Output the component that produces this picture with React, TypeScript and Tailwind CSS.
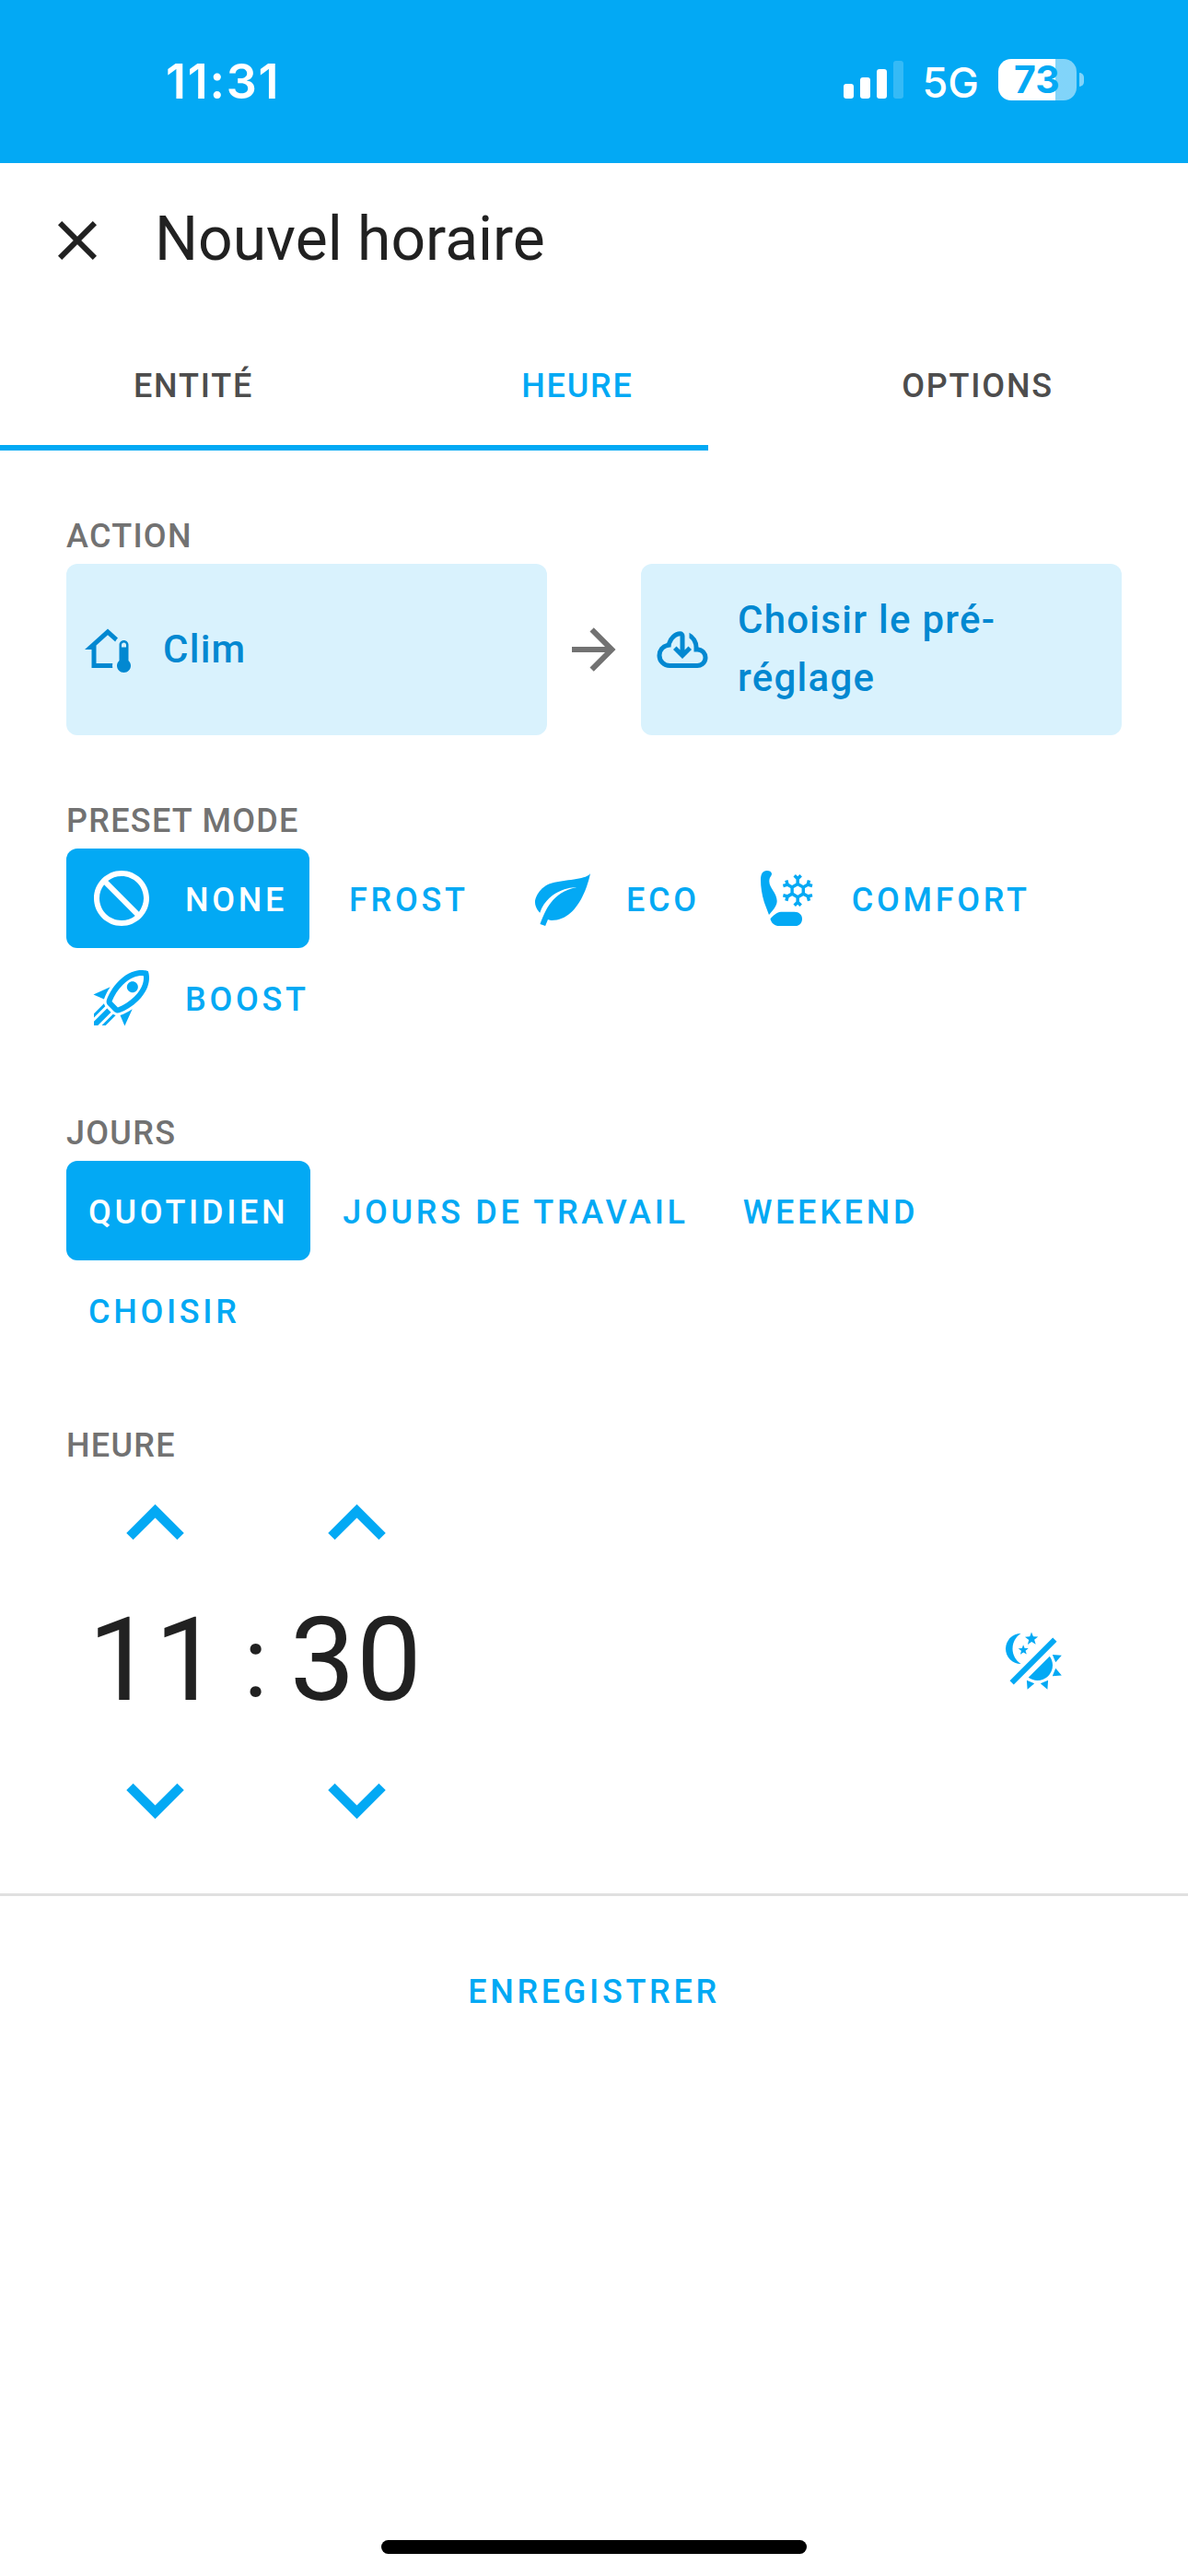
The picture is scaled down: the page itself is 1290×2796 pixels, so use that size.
import type { ReactNode } from "react";

const icons = {
  close:
    "M19,6.41L17.59,5L12,10.59L6.41,5L5,6.41L10.59,12L5,17.59L6.41,19L12,13.41L17.59,19L19,17.59L13.41,12L19,6.41Z",
  arrowRight:
    "M4,11V13H16L10.5,18.5L11.92,19.92L19.84,12L11.92,4.08L10.5,5.5L16,11H4Z",
  homeThermometer:
    "M19 8C20.11 8 21 8.9 21 10V16.76C21.61 17.31 22 18.11 22 19C22 20.66 20.66 22 19 22C17.34 22 16 20.66 16 19C16 18.11 16.39 17.31 17 16.76V10C17 8.9 17.9 8 19 8M19 9C18.45 9 18 9.45 18 10V11H20V10C20 9.45 19.55 9 19 9M12 5.69L7 10.19V18H14.1L14 19L14.1 20H5V12H2L12 3L16.4 6.96C15.89 7.4 15.5 7.97 15.25 8.61L12 5.69Z",
  cloudDownload:
    "M6.5 20Q4.22 20 2.61 18.43 1 16.85 1 14.58 1 12.63 2.17 11.1 3.35 9.57 5.25 9.15 5.68 7.35 7.38 5.73 9.07 4.1 11 4.1 11.83 4.1 12.41 4.69 13 5.28 13 6.1V12.15L14.6 10.6L16 12L12 16L8 12L9.4 10.6L11 12.15V6.1Q9.1 6.45 8.05 7.94 7 9.43 7 11H6.5Q5.05 11 4.03 12.03 3 13.05 3 14.5 3 15.95 4.03 17 5.05 18 6.5 18H18.5Q19.55 18 20.27 17.27 21 16.55 21 15.5 21 14.45 20.27 13.73 19.55 13 18.5 13H17V11Q17 9.8 16.45 8.76 15.9 7.73 15 7V4.68Q16.85 5.55 17.93 7.26 19 9 19 11 20.73 11.2 21.86 12.5 23 13.78 23 15.5 23 17.38 21.69 18.69 20.38 20 18.5 20Z",
  cancel:
    "M12 2C17.5 2 22 6.5 22 12S17.5 22 12 22 2 17.5 2 12 6.5 2 12 2M12 4C10.1 4 8.4 4.6 7.1 5.7L18.3 16.9C19.3 15.5 20 13.8 20 12C20 7.6 16.4 4 12 4M16.9 18.3L5.7 7.1C4.6 8.4 4 10.1 4 12C4 16.4 7.6 20 12 20C13.9 20 15.6 19.4 16.9 18.3Z",
  leaf: "M17,8C8,10 5.9,16.17 3.82,21.34L5.71,22L6.66,19.7C7.14,19.87 7.64,20 8,20C19,20 22,3 22,3C21,5 14,5.25 9,6.25C4,7.25 2,11.5 2,13.5C2,15.5 3.75,17.25 3.75,17.25C7,8 17,8 17,8Z",
  rocket:
    "M13.13 22.19L11.5 18.36C13.07 17.78 14.54 17 15.9 16.09L13.13 22.19M5.64 12.5L1.81 10.87L7.91 8.1C7 9.46 6.22 10.93 5.64 12.5M19.22 4C19.5 4 19.75 4 19.96 4.05C20.13 5.44 19.94 8.3 16.66 11.58C14.96 13.29 12.93 14.6 10.65 15.47L8.5 13.37C9.42 11.06 10.73 9.03 12.42 7.34C15.18 4.58 17.64 4 19.22 4M19.22 2C17.24 2 14.24 2.69 11 5.93C8.81 8.12 7.5 10.53 6.65 12.64C6.37 13.39 6.56 14.21 7.11 14.77L9.24 16.89C9.62 17.27 10.13 17.5 10.66 17.5C10.89 17.5 11.13 17.44 11.36 17.35C13.5 16.53 15.88 15.19 18.07 13C23.73 7.34 21.61 2.39 21.61 2.39S20.7 2 19.22 2M14.54 9.46C13.76 8.68 13.76 7.41 14.54 6.63S16.59 5.85 17.37 6.63C18.14 7.41 18.15 8.68 17.37 9.46C16.59 10.24 15.32 10.24 14.54 9.46M8.88 16.53L7.47 15.12L8.88 16.53M6.24 22L9.88 18.36C9.54 18.27 9.21 18.12 8.91 17.91L4.83 22H6.24M2 22H3.41L8.18 17.24L6.76 15.83L2 20.59V22M2 19.17L6.09 15.09C5.88 14.79 5.73 14.47 5.64 14.12L2 17.76V19.17Z",
  lightDarkOff:
    "M7.5,2C5.71,3.15 4.5,5.18 4.5,7.5C4.5,9.82 5.71,11.85 7.53,13C4.46,13 2,10.54 2,7.5A5.5,5.5 0 0,1 7.5,2M19.07,3.5L20.5,4.93L4.93,20.5L3.5,19.07L19.07,3.5M12.89,5.93L11.41,5L9.97,6L10.39,4.3L9,3.24L10.75,3.12L11.33,1.47L12,3.1L13.73,3.13L12.38,4.26L12.89,5.93M9.59,9.54L8.43,8.81L7.31,9.59L7.65,8.27L6.56,7.44L7.92,7.35L8.37,6.06L8.88,7.33L10.24,7.36L9.19,8.23L9.59,9.54M19,13.5A5.5,5.5 0 0,1 13.5,19C12.28,19 11.15,18.6 10.24,17.93L17.93,10.24C18.6,11.15 19,12.28 19,13.5M14.6,20.08L17.37,18.93L17.13,22.28L14.6,20.08M18.93,17.38L20.08,14.61L22.28,17.15L18.93,17.38M20.08,12.42L18.94,9.64L22.28,9.88L20.08,12.42M9.63,18.93L12.4,20.08L9.87,22.27L9.63,18.93Z",
  chevronUp: "M7.41,15.41L12,10.83L16.59,15.41L18,14L12,8L6,14L7.41,15.41Z",
  chevronDown: "M7.41,8.58L12,13.17L16.59,8.58L18,10L12,16L6,10L7.41,8.58Z",
};

const snowflake =
  "M20.79,13.95L18.46,14.57L16.46,13.44V10.56L18.46,9.43L20.79,10.05L21.31,8.12L19.54,7.65L20,5.88L18.07,5.36L17.45,7.69L15.45,8.82L13,7.38V5.12L14.71,3.41L13.29,2L12,3.29L10.71,2L9.29,3.41L11,5.12V7.38L8.5,8.82L6.5,7.69L5.92,5.36L4,5.88L4.47,7.65L2.7,8.12L3.22,10.05L5.55,9.43L7.55,10.56V13.45L5.55,14.58L3.22,13.96L2.7,15.89L4.47,16.36L4,18.12L5.93,18.64L6.55,16.31L8.55,15.18L11,16.62V18.88L9.29,20.59L10.71,22L12,20.71L13.29,22L14.7,20.59L13,18.88V16.62L15.5,15.17L17.5,16.3L18.12,18.63L20,18.12L19.53,16.35L21.3,15.88L20.79,13.95M9.5,10.56L12,9.11L14.5,10.56V13.44L12,14.89L9.5,13.44V10.56Z";

function Icon({ path, className = "size-[72px]" }: { path: string; className?: string }) {
  return (
    <svg viewBox="0 0 24 24" fill="currentColor" className={`shrink-0 ${className}`}>
      <path d={path} />
    </svg>
  );
}

function SeatCoolerIcon() {
  return (
    <svg viewBox="0 0 24 24" fill="currentColor" className="size-[72px] shrink-0">
      <path d="M5,18L3.3,13.5C2.4,10.5 2,7.8 2,5.3C2,3.2 2.8,2 4.2,2C5.4,2 6,2.5 6,3.2C6,3.9 5.2,4.2 5.1,5.8C5.1,8.2 7.9,10 7.9,13C7.9,15 6.1,16.6 5,18Z" />
      <path d="M5.5,19.4C6.6,18.1 7.9,17 9.3,16.9H14.2C15.9,16.9 17,18 17,19.4C17,21 16,22 14.5,22H8.8C6.9,22 5.8,20.9 5.5,19.4Z" />
      <path d={snowflake} transform="translate(8.4 2.2) scale(0.583)" />
    </svg>
  );
}

function Section({ label, children }: { label: string; children: ReactNode }) {
  return (
    <section className="mt-[66px]">
      <h2 className="mb-[3px] text-[36px] leading-[54px] font-medium tracking-[1.28px] text-[#727272]">
        {label}
      </h2>
      {children}
    </section>
  );
}

function ActionCard({ icon, children }: { icon: string; children: ReactNode }) {
  return (
    <div className="flex h-[186px] w-[522px] items-center rounded-xl bg-[#d9f2fd] pl-[15px] text-[#0288d1]">
      <Icon path={icon} className="size-[60px]" />
      <span className="ml-[30px] w-[360px] pb-[2px] text-[42px] leading-[63px] font-medium tracking-[1.26px]">
        {children}
      </span>
    </div>
  );
}

function Choice({
  label,
  icon,
  selected,
  className = "",
}: {
  label: string;
  icon?: ReactNode;
  selected?: boolean;
  className?: string;
}) {
  return (
    <button
      className={`flex h-[108px] items-center gap-[33px] rounded-xl px-6 text-[36px] font-medium tracking-[3.7px] whitespace-nowrap ${
        selected ? "bg-[#03a9f4] text-white" : "text-[#03a9f4]"
      } ${className}`}
    >
      {icon}
      <span className="pt-[3px]">{label}</span>
    </button>
  );
}

function TimeSpinner({ value }: { value: string }) {
  return (
    <div className="flex w-36 flex-col items-center">
      <button className="flex h-[108px] items-center text-[#03a9f4]">
        <Icon path={icons.chevronUp} className="size-[125px]" />
      </button>
      <span className="h-48 pb-0.5 text-[126px] leading-[190px] tracking-[1.5px]">{value}</span>
      <button className="flex h-[108px] items-center text-[#03a9f4]">
        <Icon path={icons.chevronDown} className="size-[125px]" />
      </button>
    </div>
  );
}

function StatusBar() {
  return (
    <div className="h-[177px] bg-[#03a9f4] font-['Inter',sans-serif] text-white">
      <div className="flex h-[173px] items-center justify-between pr-[113px] pl-[180px]">
        <span className="pt-[5px] text-[52px] leading-none font-semibold tracking-[1.7px]">11:31</span>
        <div className="flex items-center">
          <div className="flex h-[41px] items-end gap-[7px]">
            <div className="h-4 w-[11px] rounded-[3px] bg-white" />
            <div className="h-[23px] w-[11px] rounded-[3px] bg-white" />
            <div className="h-8 w-[11px] rounded-[3px] bg-white" />
            <div className="h-[41px] w-[11px] rounded-[3px] bg-white/20" />
          </div>
          <span className="ml-[21px] pt-[5px] text-[45px] leading-none font-medium">5G</span>
          <div className="ml-[21px] flex h-[45px] w-[85px] items-center rounded-[14px] bg-linear-to-r from-white from-[62px] to-white/50 to-[62px] pl-[17px]">
            <span className="text-[41px] leading-[45px] font-bold text-[#03a9f4]">73</span>
          </div>
          <div className="ml-[3px] h-[15px] w-[5px] rounded-r-full bg-white/50" />
        </div>
      </div>
    </div>
  );
}

export default function App() {
  return (
    <div className="flex h-[2796px] w-[1290px] flex-col bg-white font-['Roboto',sans-serif] text-[#212121]">
      <StatusBar />

      <header className="flex h-[168px] items-center pl-12">
        <button>
          <Icon path={icons.close} />
        </button>
        <h1 className="ml-12 pb-[3px] text-[66px] leading-none">Nouvel horaire</h1>
      </header>

      <nav className="relative flex h-36 items-center pt-1 text-[36px] font-medium tracking-[1.8px] text-[#4d4d4d]">
        <span className="w-[420px] text-center">ENTITÉ</span>
        <span className="w-[414px] text-center text-[#03a9f4]">HEURE</span>
        <span className="w-[455px] text-center">OPTIONS</span>
        <div className="absolute bottom-0 left-0 h-[6px] w-[769px] bg-[#03a9f4]" />
      </nav>

      <main className="px-[72px]">
        <Section label="ACTION">
          <div className="flex items-center justify-between">
            <ActionCard icon={icons.homeThermometer}>Clim</ActionCard>
            <Icon path={icons.arrowRight} className="size-[72px] text-[#727272]" />
            <ActionCard icon={icons.cloudDownload}>Choisir le pré-réglage</ActionCard>
          </div>
        </Section>

        <Section label="PRESET MODE">
          <div className="flex flex-wrap">
            <Choice selected label="NONE" icon={<Icon path={icons.cancel} />} />
            <Choice className="ml-[19px]" label="FROST" />
            <Choice className="ml-[18.5px]" label="ECO" icon={<Icon path={icons.leaf} />} />
            <Choice className="ml-3" label="COMFORT" icon={<SeatCoolerIcon />} />
            <Choice label="BOOST" icon={<Icon path={icons.rocket} />} />
          </div>
        </Section>

        <Section label="JOURS">
          <div className="flex flex-wrap gap-x-[11px]">
            <Choice selected label="QUOTIDIEN" />
            <Choice label="JOURS DE TRAVAIL" />
            <Choice label="WEEKEND" />
            <Choice label="CHOISIR" />
          </div>
        </Section>

        <Section label="HEURE">
          <div className="flex items-center pr-[60px] pl-6">
            <TimeSpinner value="11" />
            <span className="w-[75px] pt-0.5 text-center text-[108px] leading-none">:</span>
            <TimeSpinner value="30" />
            <Icon path={icons.lightDarkOff} className="ml-auto size-[72px] text-[#03a9f4]" />
          </div>
        </Section>
      </main>

      <footer className="mt-12 flex justify-center border-t-[3px] border-[#e0e0e0] pt-12">
        <Choice label="ENREGISTRER" />
      </footer>

      <div className="mx-auto mt-auto mb-6 h-[15px] w-[462px] shrink-0 rounded-full bg-black" />
    </div>
  );
}
